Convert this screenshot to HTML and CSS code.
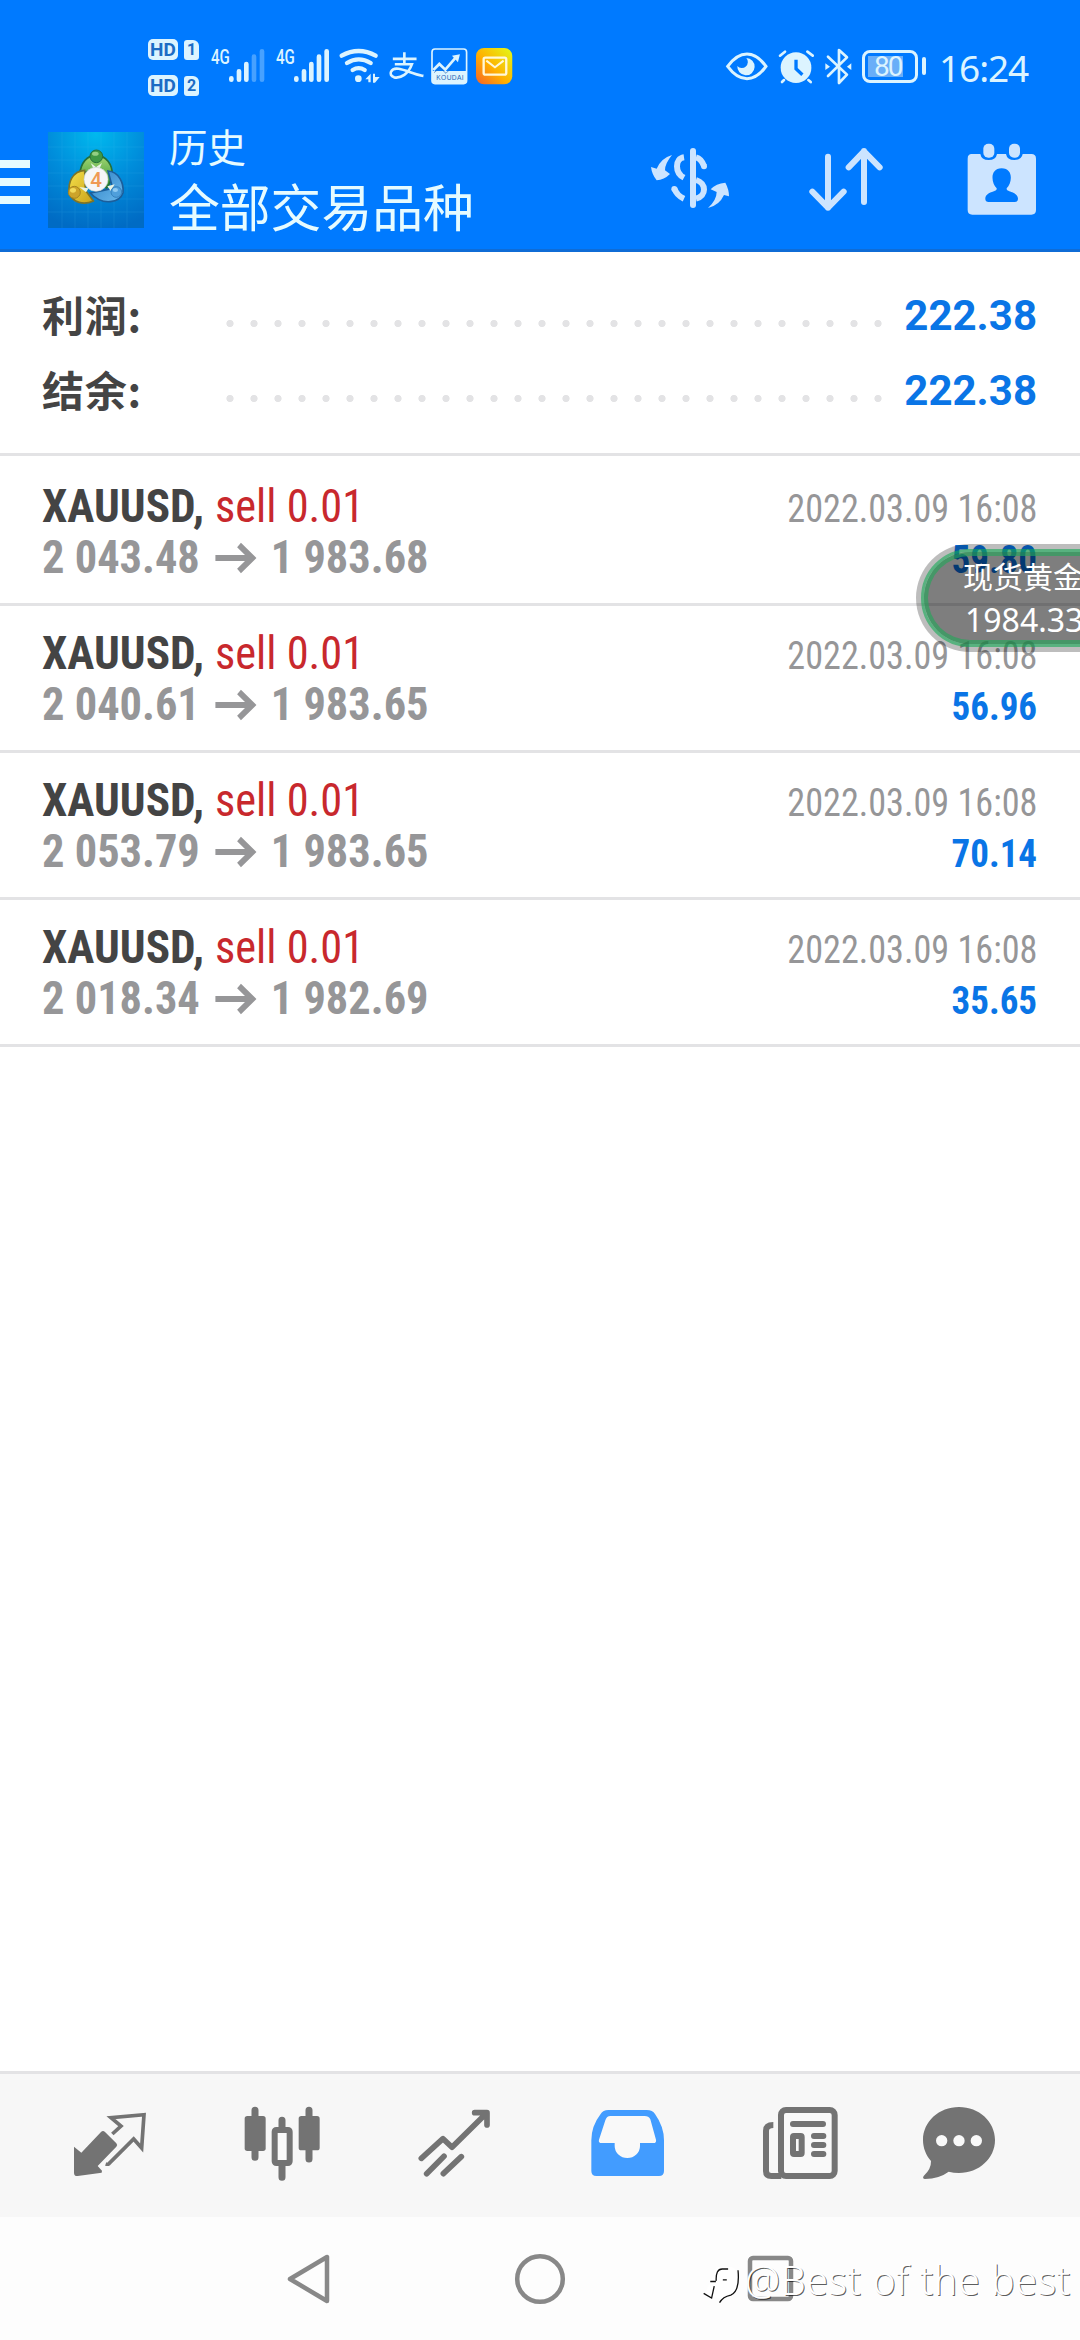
FILE: index.html
```html
<!DOCTYPE html>
<html lang="zh-CN">
<head>
<meta charset="utf-8">
<title>历史</title>
<link rel="stylesheet" href="styles.css">
</head>
<body>
<div class="screen">
  <header class="top">
    <div class="status">
      <div class="status-left">
        <div class="sims">
          <div class="sim"><span class="hd">HD</span><span class="slot">1</span></div>
          <div class="sim"><span class="hd">HD</span><span class="slot">2</span></div>
        </div>
        <span class="net">4G</span>
        <svg class="bars" viewBox="297 84 108 105"><g stroke="#dcf4ff" stroke-width="14" stroke-linecap="round"><path d="M304 175v4M327 154v25M349 132v47"/><path opacity=".32" d="M372 110v69M396 94v85"/></g></svg>
        <span class="net net2">4G</span>
        <svg class="bars" viewBox="492 84 108 105"><path stroke="#dcf4ff" stroke-width="14" stroke-linecap="round" d="M499 175v4M522 154v25M544 132v47M567 110v69M590 94v85"/></svg>
        <svg class="wifi" viewBox="627 84 123 105"><g fill="none" stroke="#dcf4ff" stroke-width="13" stroke-linecap="round"><path d="M635 107Q686 79 737 107M651 129Q686 107 722 129M668 150Q686 139 704 150"/></g><circle cx="685" cy="176" r="10" fill="#dcf4ff"/><path fill="#dcf4ff" d="M706 178l16-17v26h-7v-9zM729 161h6v10h14l-14 17h-6z"/></svg>
        <svg class="pay" viewBox="777 99 102 82"><g fill="none" stroke="#dcf4ff" stroke-width="8"><path d="M792 117h64M823 101v30M798 133h48C836 162 812 177 792 173C772 166 782 143 806 147C830 151 850 164 877 168" stroke-linecap="square"/></g></svg>
        <svg class="koudai" viewBox="903 84 110 110"><rect x="906" y="87" width="104" height="104" rx="9" fill="none" stroke="#dcf4ff" stroke-width="5"/><path d="M906 153h104v32q0 6-6 6h-92q-6 0-6-6z" fill="#dcf4ff"/><path d="M910 150l18-18 18 17 33-38" fill="none" stroke="#dcf4ff" stroke-width="8"/><path d="M966 107l24-4-6 24z" fill="#dcf4ff"/><path d="M912 158l18-14 18 16 18-18" fill="none" stroke="#2467b5" stroke-width="2"/><text x="919" y="180" font-size="20" textLength="82" class="koudai-text">KOUDAI</text></svg>
        <svg class="mail" viewBox="1037 84 110 110"><defs><linearGradient id="mg" x1="0" y1="1" x2="1" y2="0"><stop offset="0" stop-color="#f5612a"/><stop offset=".45" stop-color="#ffb000"/><stop offset="1" stop-color="#e2fb18"/></linearGradient></defs><rect x="1037" y="84" width="109" height="109" rx="24" fill="url(#mg)"/><rect x="1060" y="113" width="68" height="51" rx="5" fill="none" stroke="#fff8d8" stroke-width="7"/><path d="M1068 122l26 20 26-20" fill="none" stroke="#fff8d8" stroke-width="6"/></svg>
      </div>
      <div class="status-right">
        <svg class="eye" viewBox="80 96 126 87"><path d="M85 139Q112 102 143 102Q174 102 200 139Q174 176 143 176Q112 176 85 139z" fill="none" stroke="#dcf4ff" stroke-width="9"/><path d="M141 114a26 26 0 1 1-27 24a15 15 0 0 0 27-24z" fill="#dcf4ff"/></svg>
        <svg class="alarm" viewBox="238 90 109 100"><circle cx="292" cy="143" r="46" fill="#dcf4ff"/><path d="M244 107l15-12M326 95l16 12M256 180l-6 6M329 180l7 6" stroke="#dcf4ff" stroke-width="8" stroke-linecap="round"/><path d="M292 119v27l19 18" stroke="#007aff" stroke-width="10" fill="none"/></svg>
        <svg class="bt" viewBox="377 84 82 111"><path d="M386 110l57 54-24 25V90l24 22-57 56" fill="none" stroke="#dcf4ff" stroke-width="8" stroke-linejoin="round" stroke-linecap="round"/><path d="M378 130l14 10-14 10zM456 130l-13 10 13 10z" fill="#dcf4ff"/></svg>
        <div class="battery"><span class="level">80</span></div><i class="battery-tip"></i>
        <span class="clock">16:24</span>
      </div>
    </div>
    <div class="appbar">
      <div class="menu"><i></i><i></i><i></i></div>
      <svg class="logo" viewBox="24 21 288 288"><defs>
        <radialGradient id="lb" cx=".5" cy=".02" r="1"><stop offset="0" stop-color="#00b9ee"/><stop offset=".5" stop-color="#008ddb"/><stop offset="1" stop-color="#006bc4"/></radialGradient>
        <linearGradient id="lg" x1="0" y1="0" x2="0" y2="1"><stop offset="0" stop-color="#a5d873"/><stop offset="1" stop-color="#2c8e31"/></linearGradient>
        <linearGradient id="ly" x1="0" y1="0" x2="1" y2="1"><stop offset="0" stop-color="#f5e04b"/><stop offset="1" stop-color="#c9a21a"/></linearGradient>
        <linearGradient id="lc" x1="0" y1="0" x2="1" y2="1"><stop offset="0" stop-color="#2a7fc4"/><stop offset="1" stop-color="#6cb9ec"/></linearGradient></defs>
        <rect x="24" y="21" width="288" height="288" fill="url(#lb)"/>
        <path d="M24 66h288M24 105h288M24 144h288M24 183h288M24 222h288M24 261h288M66 21v288M105 21v288M144 21v288M183 21v288M222 21v288M261 21v288" stroke="#4cc3f5" stroke-width="2" opacity=".2"/>
        <g stroke-width="5"><path d="M119 150C122 112 142 91 168 91C198 91 218 118 217 151Q210 178 199 190L168 128z" fill="url(#lg)" stroke="#256f3a"/>
        <path d="M134 136C98 139 83 170 88 205C98 234 132 241 160 228L136 196z" fill="url(#ly)" stroke="#7d7428"/>
        <path d="M204 138C237 140 252 175 249 203C240 231 190 246 151 204L190 196L218 190z" fill="url(#lc)" stroke="#1c5e9b"/></g>
        <path d="M152 114l16 12 18-12-8 18h-17zM118 186l28 4-8 12zM202 184l22-6-12 20z" fill="#e8f3e4"/>
        <circle cx="169" cy="94" r="19" fill="#3f9844" stroke="#28703a" stroke-width="3"/><ellipse cx="166" cy="86" rx="10" ry="6" fill="#93ce83"/>
        <circle cx="103" cy="202" r="18" fill="#cda42a" stroke="#a58420" stroke-width="3"/><ellipse cx="99" cy="196" rx="9" ry="7" fill="#f2da5b"/>
        <circle cx="229" cy="201" r="16" fill="#4f9fdb" stroke="#3380bd" stroke-width="3"/><ellipse cx="226" cy="195" rx="8" ry="6" fill="#8fcaf2"/>
        <circle cx="168" cy="163" r="36" fill="#f6f6f8" stroke="#c8d2cc" stroke-width="2"/>
        <text x="168" y="186" text-anchor="middle" class="logo-digit">4</text></svg>
      <div class="titles"><div class="t1">历史</div><div class="t2">全部交易品种</div></div>
      <svg class="ic-cur" viewBox="93 81 237 186"><g fill="none" stroke="#cce4ff" stroke-width="18"><path d="M219 93v162" stroke-linecap="round"/><path d="M192 112C164 116 164 158 192 173M228 112Q244 116 252 138" /><path d="M228 180C260 190 260 228 228 236M192 236Q170 226 163 205"/></g><circle cx="252" cy="139" r="9" fill="#cce4ff"/><circle cx="163" cy="207" r="9" fill="#cce4ff"/><path fill="#cce4ff" d="M156 105Q134 132 135 151L150 162Q132 180 110 181Q96 164 93 141L110 146Q124 114 156 105zM264 264Q290 240 290 216L272 208Q288 190 316 188Q327 208 327 229L312 225Q298 256 264 264z"/></svg>
      <svg class="ic-sort" viewBox="567 81 225 195"><path d="M624 110v153M577 215l47 48 47-48M732 246V93M686 142l46-48 47 48" fill="none" stroke="#cce4ff" stroke-width="18" stroke-linecap="round" stroke-linejoin="round"/></svg>
      <svg class="ic-cal" viewBox="1042 69 207 216"><path fill="#cce4ff" d="M1056 102h26Q1085 120 1107 120Q1129 120 1132 102h27Q1162 120 1184 120Q1206 120 1209 102h26q14 0 14 14v154q0 14-14 14h-177q-14 0-14-14V116q0-14 12-14z"/><rect x="1091" y="71" width="33" height="42" rx="15" fill="#cce4ff"/><rect x="1168" y="71" width="33" height="42" rx="15" fill="#cce4ff"/><path fill="#007aff" d="M1146 145c37 0 31 46 15 60-2 12 34 8 34 32q0 9-10 9h-78q-10 0-10-9c0-24 36-20 34-32-16-14-22-60 15-60z"/></svg>
    </div>
  </header>

  <section class="summary">
    <div class="sum"><span class="label">利润:</span><i class="dots"></i><b class="total">222.38</b></div>
    <div class="sum"><span class="label">结余:</span><i class="dots"></i><b class="total">222.38</b></div>
  </section>

  <main class="deals">
    <article class="deal"><div class="line"><span class="sym"><b>XAUUSD,</b><em>sell 0.01</em></span><span class="date">2022.03.09 16:08</span></div><div class="line"><span class="price">2 043.48<svg class="arrow" viewBox="0 0 42 30"><path d="M0 15h38M25 2l14 13-14 13"/></svg>1 983.68</span><span class="profit">59.80</span></div></article>
    <article class="deal"><div class="line"><span class="sym"><b>XAUUSD,</b><em>sell 0.01</em></span><span class="date">2022.03.09 16:08</span></div><div class="line"><span class="price">2 040.61<svg class="arrow" viewBox="0 0 42 30"><path d="M0 15h38M25 2l14 13-14 13"/></svg>1 983.65</span><span class="profit">56.96</span></div></article>
    <article class="deal"><div class="line"><span class="sym"><b>XAUUSD,</b><em>sell 0.01</em></span><span class="date">2022.03.09 16:08</span></div><div class="line"><span class="price">2 053.79<svg class="arrow" viewBox="0 0 42 30"><path d="M0 15h38M25 2l14 13-14 13"/></svg>1 983.65</span><span class="profit">70.14</span></div></article>
    <article class="deal"><div class="line"><span class="sym"><b>XAUUSD,</b><em>sell 0.01</em></span><span class="date">2022.03.09 16:08</span></div><div class="line"><span class="price">2 018.34<svg class="arrow" viewBox="0 0 42 30"><path d="M0 15h38M25 2l14 13-14 13"/></svg>1 982.69</span><span class="profit">35.65</span></div></article>
  </main>

  <nav class="tabs">
    <svg class="tab" viewBox="96 135 228 228"><path fill="#737373" d="M102 260l22 18 59-62q6-6 12 0l34 34q5 5 0 10l-56 58 13 14-1 6-72 10q-11 1-11-10z"/><path fill="none" stroke="#737373" stroke-width="11" d="M217 222l26-24-30-25 99-9-7 100-24-27-74 74q-4 3-10 1"/></svg>
    <svg class="tab" viewBox="613 135 228 228"><path stroke="#737373" stroke-width="21" stroke-linecap="round" d="M643 151v141M805 151v146M724 181v30M724 315v37"/><rect x="612" y="168" width="63" height="105" rx="8" fill="#737373"/><rect x="774" y="168" width="63" height="103" rx="8" fill="#737373"/><rect x="702" y="210" width="45" height="99" rx="5" fill="#f9f9f9" stroke="#737373" stroke-width="18"/></svg>
    <svg class="tab" viewBox="1129 135 228 228"><path fill="none" stroke="#737373" stroke-width="17" stroke-linecap="round" stroke-linejoin="round" d="M1142 295l65-59 27 26 104-103M1302 158h37v37M1158 341l52-52M1208 341l54-51"/></svg>
    <svg class="tab" viewBox="147 135 228 228"><path fill="#429cff" d="M202 150h115q18 0 25 12 27 38 27 79v92q0 15-15 15H166q-15 0-15-15v-92q0-43 28-79 7-12 23-12z"/><path fill="#f9f9f9" d="M208 168h103q12 0 17 10l17 61q2 10-8 10h-40v9a38 36 0 0 1-76 0v-9h-38q-12 0-9-10l19-58q4-13 15-13z"/></svg>
    <svg class="tab" viewBox="665 135 228 228"><rect x="722" y="150" width="161" height="198" rx="15" fill="#f9f9f9" stroke="#737373" stroke-width="18"/><path d="M699 195q-22 0-22 17v121q0 15 16 15h30" fill="none" stroke="#737373" stroke-width="18"/><path stroke="#737373" stroke-width="18" stroke-linecap="round" d="M758 192h90M821 228h28M821 255h28M821 282h28"/><rect x="758" y="228" width="26" height="54" rx="3" fill="#f9f9f9" stroke="#737373" stroke-width="18"/></svg>
    <svg class="tab chat" viewBox="1140 135 228 228"><path fill="#737373" d="M1254 141c60 0 108 44 108 99s-48 99-108 99q-16 0-31-4-28 21-71 22-9-1-4-9 23-21 22-45c-15-17-24-39-24-63 0-55 48-99 108-99z"/><circle cx="1202" cy="242" r="17" fill="#f9f9f9"/><circle cx="1254" cy="242" r="17" fill="#f9f9f9"/><circle cx="1306" cy="242" r="17" fill="#f9f9f9"/></svg>
  </nav>
  <div class="sysnav">
    <svg class="sys" viewBox="0 0 52 52"><path d="M44 4v44L7 26z"/></svg>
    <svg class="sys" viewBox="0 0 52 52"><circle cx="26" cy="26" r="22.8"/></svg>
    <svg class="sys" viewBox="0 0 52 52"><rect x="5" y="5" width="41" height="41" rx="3"/></svg>
  </div>

  <div class="quote"><div class="ring"><span class="q-name">现货黄金</span><span class="q-val">1984.33</span></div></div>
  <div class="mark">
    <svg class="mark-logo" viewBox="40 70 115 130"><path d="M80 82H128Q148 90 147 122Q144 158 116 168L92 188V176L60 172Q40 160 62 130z" fill="#fff"/><path d="M62 126h17M80 124Q78 88 98 88H116M146 92Q152 156 124 167Q100 172 90 190M74 140L66 176L42 162M100 121h12" fill="none" stroke="#111" stroke-width="4"/></svg>
    <span class="mark-text">@Best of the best</span>
  </div>
</div>
</body>
</html>
```
FILE: styles.css
```css
* { box-sizing: border-box; }
body { margin: 0; background: #fff; }
svg { display: block; flex: none; overflow: visible; }
i, em { font-style: normal; }
.screen { position: relative; width: 1080px; height: 2340px; display: flex; flex-direction: column; overflow: hidden; background: #fff; font-family: Roboto, "Noto Sans CJK SC", sans-serif; }

.top { height: 252px; background: #007aff; border-bottom: 3px solid #0f6cd6; display: flex; flex-direction: column; flex: none; }
.status { height: 110px; display: flex; justify-content: space-between; color: #dcf4ff; }
.status-left { display: flex; align-items: flex-start; padding-left: 148px; }
.sims { display: flex; flex-direction: column; gap: 14px; padding-top: 38px; width: 63px; }
.sim { display: flex; align-items: flex-end; gap: 6px; height: 22px; }
.hd, .slot { background: #dcf4ff; color: #1c6cc4; font-weight: 700; text-align: center; }
.hd { width: 30px; height: 21px; border-radius: 5px; font-size: 19px; line-height: 21px; }
.slot { width: 15px; height: 20px; border-radius: 3px 6px 3px 3px; font-size: 16px; line-height: 20px; }
.net { width: 18px; font-size: 21px; line-height: 24px; margin-top: 45px; font-weight: 500; transform: scaleX(.72); transform-origin: 0 0; white-space: nowrap; }
.net2 { margin-left: 11px; }
.bars { width: 36px; height: 35px; margin-top: 48px; }
.wifi { width: 41px; height: 35px; margin: 48px 0 0 9px; }
.pay { width: 34px; height: 27px; margin: 53px 0 0 9px; }
.koudai { width: 36.6px; height: 36.6px; margin: 48px 0 0 8px; }
.koudai-text { font-family: "Liberation Sans", sans-serif; fill: #2467b5; }
.mail { width: 36.6px; height: 36.6px; margin: 48px 0 0 8px; }
.status-right { display: flex; align-items: flex-start; padding-right: 50px; }
.eye { width: 42px; height: 29px; margin-top: 52px; }
.alarm { width: 36.4px; height: 33.4px; margin: 50px 0 0 10.6px; }
.bt { width: 27.3px; height: 37px; margin: 48px 0 0 10px; }
.battery { width: 56px; height: 33px; margin: 50px 0 0 10px; border: 3px solid #dcf4ff; border-radius: 8px; padding: 3px; }
.level { display: block; height: 21px; background: linear-gradient(90deg, #69aef8 35px, transparent 35px); font-size: 28px; line-height: 22px; padding-left: 6px; letter-spacing: -2px; }
.battery-tip { width: 4px; height: 18px; margin: 57px 0 0 4px; background: #dcf4ff; border-radius: 2px; }
.clock { width: 91px; margin: 42px 0 0 13px; font: 37px/52px "Noto Sans", sans-serif; letter-spacing: -1.1px; white-space: nowrap; }

.appbar { height: 139px; display: flex; align-items: flex-start; }
.menu { width: 30px; display: flex; flex-direction: column; gap: 10px; margin: 50px 18px 0 0; }
.menu i { height: 8px; background: #e6fbff; }
.logo { width: 96px; height: 96px; margin-top: 22px; }
.logo-digit { font: 500 62px Roboto, sans-serif; fill: #ef9a55; }
.titles { width: 482px; margin: 17px 0 0 25px; color: #e6fbff; white-space: nowrap; }
.t1 { font-size: 38.5px; line-height: 44px; }
.t2 { font-size: 50.8px; line-height: 78px; }
.ic-cur { width: 79px; height: 62px; margin-top: 37px; }
.ic-sort { width: 75px; height: 65px; margin: 37px 0 0 79px; }
.ic-cal { width: 69px; height: 72px; margin: 33px 0 0 83px; }

.summary { height: 204px; padding: 26px 43px 0 42px; border-bottom: 3px solid #e3e3e5; flex: none; }
.sum { height: 75px; display: flex; align-items: flex-start; }
.label { width: 184px; font: 700 42px/72px "Noto Sans CJK SC", sans-serif; color: #444; letter-spacing: .7px; }
.dots { width: 672px; height: 7px; margin-top: 42px; background: radial-gradient(circle at 4px 3.5px, #e3e3e5 3.2px, transparent 4px) 0 0 / 24px 7px repeat-x; }
.total { flex: 1; font-size: 42px; line-height: 75px; color: #0a75e6; text-align: right; white-space: nowrap; }

.deals { flex: 1; padding-top: 3px; }
.deal { height: 147px; padding: 21px 43px 0 42px; border-bottom: 3px solid #e3e3e5; }
.line { height: 51px; display: flex; justify-content: space-between; align-items: baseline; line-height: 51px; white-space: nowrap; font-stretch: 75%; font-family: "Roboto Condensed", Roboto, sans-serif; }
.sym { display: flex; font-size: 47px; color: #444; }
.sym b { width: 173px; transform: scaleX(.963); transform-origin: 0 0; }
.sym em { color: #c8282d; transform: scaleX(.945); transform-origin: 0 0; }
.price { font-size: 47px; font-weight: 700; color: #969698; transform: scaleX(.945); transform-origin: 0 0; }
.arrow { display: inline-block; width: 43px; height: 30px; margin: 0 16px; fill: none; stroke: #969698; stroke-width: 6; vertical-align: 0; }
.date { font-size: 39.4px; color: #969698; transform: scaleX(.918); transform-origin: 100% 0; }
.profit { font-size: 39.4px; font-weight: 700; color: #0a75e6; transform: scaleX(.94); transform-origin: 100% 0; }

.tabs { height: 146px; flex: none; background: #f7f7f7; border-top: 3px solid #e3e3e5; display: flex; gap: 96.5px; padding: 31px 0 0 72px; }
.tab { width: 76px; height: 76px; }
.chat { margin-left: -14px; }
.sysnav { height: 123px; flex: none; background: #fdfdfd; display: flex; justify-content: center; gap: 179px; padding-top: 36px; }
.sys { width: 52px; height: 52px; fill: none; stroke: #888; stroke-width: 4.5; stroke-linejoin: round; }

.quote { position: absolute; left: 916px; top: 544px; width: 230px; height: 108px; border-radius: 54px; padding: 5px; background: rgba(0,0,0,.26); }
.ring { height: 98px; border-radius: 49px; border: 3px solid rgba(20,170,85,.6); box-shadow: inset 0 0 0 4px rgba(38,165,90,.65), inset 0 0 0 60px rgba(0,0,0,.33); padding: 0 0 0 39px; display: flex; flex-direction: column; color: #fff; white-space: nowrap; }
.q-name { font: 30px/46px "Noto Sans CJK SC", sans-serif; }
.q-val { font: 32px/38px "Noto Sans", sans-serif; padding: 3px 0 0 2px; }

.mark { position: absolute; left: 703px; top: 2254px; display: flex; align-items: flex-start; }
.mark-logo { width: 38px; height: 43px; margin-top: 9px; }
.mark-text { margin-left: 4px; font: 300 39.5px/52px "Noto Sans", sans-serif; letter-spacing: .55px; color: #fff; text-shadow: 1px 1px 0 rgba(0,0,0,.65); white-space: nowrap; }
```
